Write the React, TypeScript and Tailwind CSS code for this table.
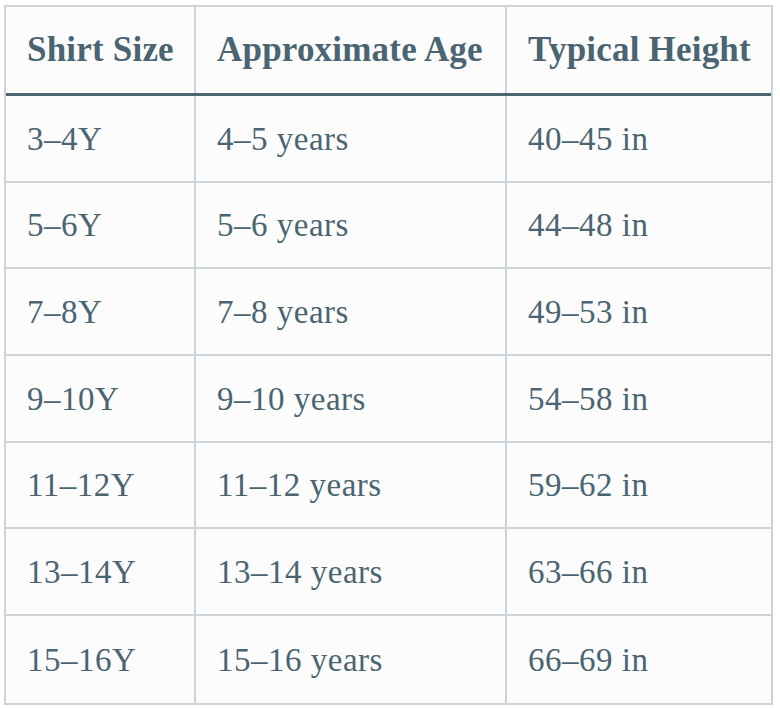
const rows = [
  ["3–4Y", "4–5 years", "40–45 in"],
  ["5–6Y", "5–6 years", "44–48 in"],
  ["7–8Y", "7–8 years", "49–53 in"],
  ["9–10Y", "9–10 years", "54–58 in"],
  ["11–12Y", "11–12 years", "59–62 in"],
  ["13–14Y", "13–14 years", "63–66 in"],
  ["15–16Y", "15–16 years", "66–69 in"],
];

const headers = ["Shirt Size", "Approximate Age", "Typical Height"];

export default function App() {
  return (
    <div className="min-h-[708px] w-[780px] bg-white pl-[4px] pt-[5px] font-['Liberation_Serif',serif] text-[#4a6571]">
      <div className="w-[769px] border-2 border-[#cdd4d9] bg-[#fcfcfd]">
        <div className="grid h-[89px] grid-cols-[190px_311px_1fr] border-b-[3px] border-[#4c6571]">
          {headers.map((h, i) => (
            <div
              key={h}
              className={`flex items-center pl-[21px] text-[35px] font-bold tracking-[0.2px] ${i < 2 ? "border-r-2 border-[#cdd4d9]" : ""}`}
            >
              {h}
            </div>
          ))}
        </div>
        {rows.map((r, ri) => (
          <div
            key={ri}
            className={`grid h-[86.7px] grid-cols-[190px_311px_1fr] ${ri < rows.length - 1 ? "border-b-2 border-[#cdd4d9]" : ""}`}
          >
            {r.map((c, i) => (
              <div
                key={i}
                className={`flex items-center pl-[21px] pt-[2px] text-[33px] tracking-[0.5px] ${i < 2 ? "border-r-2 border-[#cdd4d9]" : ""}`}
              >
                {c}
              </div>
            ))}
          </div>
        ))}
      </div>
    </div>
  );
}
